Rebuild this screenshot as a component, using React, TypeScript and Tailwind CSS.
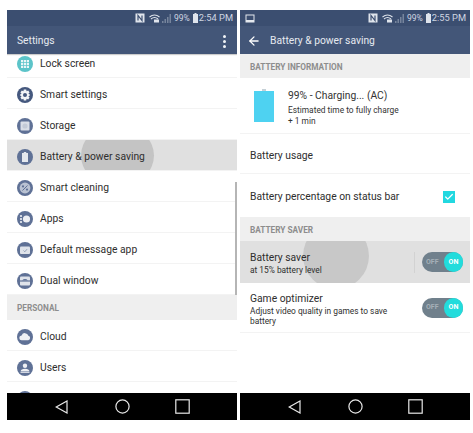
import { ArrowLeft, Check } from 'lucide-react';
import type { ReactNode } from 'react';

function StatusBar({ time, shot }: { time: string; shot?: boolean }) {
  return (
    <div className="h-[16px] bg-[#3b4e70] flex items-center pl-[5px] pr-[4px] text-[#cfd6e2] leading-none">
      {shot && (
        <svg width="10" height="9" viewBox="0 0 10 9">
          <rect x="0.5" y="0.5" width="9" height="8" fill="#e4e8ee" />
          <rect x="1.5" y="1.5" width="7" height="4.5" fill="#3b4e70" />
        </svg>
      )}
      <div className="ml-auto flex items-center">
        <svg width="10" height="10" viewBox="0 0 10 10">
          <rect x="0.5" y="0.5" width="9" height="9" fill="#dfe4ec" />
          <path d="M3 7.5V2.5L7 7.5V2.5" stroke="#3b4e70" strokeWidth="1.2" fill="none" />
        </svg>
        <svg className="ml-[4px]" width="11" height="9" viewBox="0 0 11 9" fill="none" stroke="#dfe4ec">
          <path d="M0.5 3Q5.5 -1 10.5 3M2 5Q5.5 2 9 5" strokeWidth="1.1" />
          <rect x="5" y="5.5" width="5" height="3" fill="#dfe4ec" stroke="none" />
        </svg>
        <svg className="ml-[2px]" width="9" height="9" viewBox="0 0 9 9" fill="#76849c">
          <path d="M0 9V7H1.5V9ZM2.5 9V5H4V9ZM5 9V3H6.5V9ZM7.5 9V0H9V9Z" />
        </svg>
        <span className="ml-[3px] text-[8.5px]">99%</span>
        <svg className="ml-[3px]" width="5" height="10" viewBox="0 0 5 10" fill="#dfe4ec">
          <path d="M1.5 0H3.5V1H5V10H0V1H1.5Z" />
        </svg>
        <span className="ml-[1px] text-[9.3px]">{time}</span>
      </div>
    </div>
  );
}

function NavBar() {
  return (
    <div className="h-[27px] bg-black flex items-center justify-between pl-[48px] pr-[47px]">
      <svg width="14" height="14" viewBox="0 0 14 14" fill="none" stroke="#e8e8e8" strokeWidth="1.2">
        <path d="M12 1V13L1.2 7Z" />
      </svg>
      <svg width="15" height="15" viewBox="0 0 15 15" fill="none" stroke="#e8e8e8" strokeWidth="1.2">
        <circle cx="7.5" cy="7.5" r="6.6" />
      </svg>
      <svg width="15" height="15" viewBox="0 0 15 15" fill="none" stroke="#e8e8e8" strokeWidth="1.2">
        <rect x="0.8" y="0.8" width="13.4" height="13.4" />
      </svg>
    </div>
  );
}

function SettingIcon({ color = '#5f7196', children }: { color?: string; children: ReactNode }) {
  return (
    <svg width="16" height="16" viewBox="0 0 16 16" className="shrink-0">
      <circle cx="8" cy="8" r="8" fill={color} />
      {children}
    </svg>
  );
}

const icons: Record<string, ReactNode> = {
  lock: (
    <SettingIcon color="#5cc4c9">
      <g fill="#eaf6f7">
        <rect x="4" y="4" width="2.2" height="2.2" /><rect x="6.9" y="4" width="2.2" height="2.2" /><rect x="9.8" y="4" width="2.2" height="2.2" />
        <rect x="4" y="6.9" width="2.2" height="2.2" /><rect x="6.9" y="6.9" width="2.2" height="2.2" /><rect x="9.8" y="6.9" width="2.2" height="2.2" />
        <rect x="4" y="9.8" width="2.2" height="2.2" /><rect x="6.9" y="9.8" width="2.2" height="2.2" /><rect x="9.8" y="9.8" width="2.2" height="2.2" />
      </g>
    </SettingIcon>
  ),
  gear: (
    <SettingIcon color="#45587e">
      <path d="M6.8 2.6H9.2L9.6 4.2L11.2 3.4L12.6 5.4L11.4 6.6L13.2 8L11.4 9.4L12.6 10.6L11.2 12.6L9.6 11.8L9.2 13.4H6.8L6.4 11.8L4.8 12.6L3.4 10.6L4.6 9.4L2.8 8L4.6 6.6L3.4 5.4L4.8 3.4L6.4 4.2Z" fill="#f1f3f6" />
      <circle cx="8" cy="8" r="2" fill="#45587e" />
    </SettingIcon>
  ),
  storage: (
    <SettingIcon>
      <rect x="3.5" y="3.5" width="9" height="9" rx="1" fill="#d9dee7" />
      <circle cx="8" cy="8" r="2.6" fill="#c3cad7" />
    </SettingIcon>
  ),
  battery: (
    <SettingIcon>
      <path d="M6.8 3H9.2V4H11V13H5V4H6.8Z" fill="#e4e8ee" />
    </SettingIcon>
  ),
  clean: (
    <SettingIcon>
      <circle cx="8" cy="8" r="5.4" fill="#b9c2d2" />
      <circle cx="6" cy="6.4" r="1.1" fill="#5f7196" />
      <circle cx="10" cy="9.6" r="1.1" fill="#5f7196" />
      <path d="M5.5 10.5L10.5 5.5" stroke="#5f7196" strokeWidth="1" />
    </SettingIcon>
  ),
  apps: (
    <SettingIcon>
      <circle cx="9.5" cy="8" r="3.6" fill="#eef0f4" />
      <circle cx="4" cy="5" r="1.1" fill="#eef0f4" /><circle cx="4" cy="8" r="1.1" fill="#eef0f4" /><circle cx="4" cy="11" r="1.1" fill="#eef0f4" />
    </SettingIcon>
  ),
  message: (
    <SettingIcon>
      <rect x="3" y="4.5" width="10" height="7.5" rx="1" fill="#dfe3ea" />
      <path d="M6.5 8.5L7.8 9.8L10 7.2" stroke="#8b98b0" strokeWidth="0.9" fill="none" />
    </SettingIcon>
  ),
  dual: (
    <SettingIcon>
      <rect x="3" y="3.5" width="10" height="9" rx="1" fill="#dfe3ea" />
      <rect x="3" y="7.4" width="10" height="1.2" fill="#5f7196" />
      <path d="M5 7.4Q8 4.5 11 7.4Z" fill="#5f7196" />
    </SettingIcon>
  ),
  cloud: (
    <SettingIcon>
      <path d="M4.8 11.2a2.4 2.4 0 0 1-.2-4.8a3.6 3.6 0 0 1 6.8.3a2.3 2.3 0 0 1-.2 4.5Z" fill="#eef0f4" />
    </SettingIcon>
  ),
  users: (
    <SettingIcon>
      <circle cx="8" cy="5.8" r="2.2" fill="#eef0f4" />
      <path d="M3.5 11.5Q4 8.8 8 8.8T12.5 11.5Z" fill="#eef0f4" />
      <rect x="3.5" y="12" width="9" height="0.8" fill="#eef0f4" />
    </SettingIcon>
  ),
};

function SettingRow({ icon, label, active }: { icon: string; label: string; active?: boolean }) {
  return (
    <div className={`relative h-[31px] shrink-0 flex items-center gap-[7px] pl-[10px] pt-[3px] text-[10.3px] text-[#2e2e2e] overflow-hidden border-b border-[#f3f3f3] ${active ? 'bg-[#e0e0e0]' : 'bg-white'}`}>
      {active && <div className="absolute left-[74px] top-[-12px] w-[73px] h-[55px] rounded-full bg-[#c4c4c4]" />}
      <span className="relative flex">{icons[icon]}</span>
      <span className="relative">{label}</span>
    </div>
  );
}

function SectionHeader({ children, className }: { children: string; className: string }) {
  return (
    <div className={`bg-[#efefef] flex items-center pl-[10px] pt-[2px] text-[8.25px] font-bold text-[#8d8d8d] ${className}`}>
      {children}
    </div>
  );
}

function Toggle() {
  return (
    <div className="relative w-[41px] h-[20px] rounded-full bg-[#70808c] flex items-center pl-[4px] text-[7px] font-bold text-[#a5b0b8]">
      OFF
      <div className="absolute right-0 top-0 w-[19px] h-[20px] rounded-full bg-[#22dcdc] flex items-center justify-center text-white">ON</div>
    </div>
  );
}

function SettingsPhone() {
  return (
    <div className="relative w-[230px] h-[410px] flex flex-col overflow-hidden">
      <StatusBar time="2:54 PM" />
      <div className="h-[28px] bg-[#435678] flex items-center justify-between pl-[10px] pr-[11px] pt-[2px] text-[10.3px] text-[#e6eaf0] shadow-[0_1px_1px_rgba(0,0,0,0.2)] z-10">
        <span>Settings</span>
        <svg width="3" height="13" viewBox="0 0 3 13" fill="#f2f4f7">
          <circle cx="1.5" cy="1.5" r="1.5" /><circle cx="1.5" cy="6.5" r="1.5" /><circle cx="1.5" cy="11.5" r="1.5" />
        </svg>
      </div>
      <div className="flex-1 min-h-0 overflow-hidden flex flex-col">
        <div className="h-[24px] shrink-0 flex items-end overflow-hidden">
          <div className="flex-1 h-[31px] shrink-0 flex items-center gap-[7px] pl-[10px] pt-[3px] text-[10.3px] text-[#2e2e2e] border-b border-[#f3f3f3]">
            {icons.lock}
            <span>Lock screen</span>
          </div>
        </div>
        <SettingRow icon="gear" label="Smart settings" />
        <SettingRow icon="storage" label="Storage" />
        <SettingRow icon="battery" label="Battery & power saving" active />
        <SettingRow icon="clean" label="Smart cleaning" />
        <SettingRow icon="apps" label="Apps" />
        <SettingRow icon="message" label="Default message app" />
        <SettingRow icon="dual" label="Dual window" />
        <SectionHeader className="h-[25px] shrink-0">PERSONAL</SectionHeader>
        <SettingRow icon="cloud" label="Cloud" />
        <SettingRow icon="users" label="Users" />
        <SettingRow icon="users" label="" />
      </div>
      <div className="absolute right-[0px] top-[172px] w-[2px] h-[113px] bg-[#b5b5b5]" />
      <div className="z-10"><NavBar /></div>
    </div>
  );
}

function BatteryPhone() {
  return (
    <div className="relative w-[230px] h-[410px] flex flex-col overflow-hidden">
      <StatusBar time="2:55 PM" shot />
      <div className="h-[28px] bg-[#435678] flex items-center pl-[7px] gap-[9px] pt-[2px] text-[10.3px] text-[#e6eaf0]">
        <ArrowLeft size={14} strokeWidth={2.2} className="text-white" />
        <span>Battery &amp; power saving</span>
      </div>
      <SectionHeader className="h-[24px]">BATTERY INFORMATION</SectionHeader>
      <div className="h-[56px] flex items-center pl-[14px] border-b border-[#f3f3f3]">
        <div className="flex flex-col items-center">
          <div className="w-[4px] h-[2px] bg-[#c5d0d6]" />
          <div className="w-[20px] h-[31px] bg-[#4ed2f1]" />
        </div>
        <div className="ml-[14px] pt-[5px] text-[#333]">
          <div className="text-[10.3px] leading-[14px] mb-[2px]">99% - Charging... (AC)</div>
          <div className="text-[8.35px] leading-[11px]">Estimated time to fully charge</div>
          <div className="text-[8.35px] leading-[11px]">+ 1 min</div>
        </div>
      </div>
      <div className="h-[40px] flex items-center pl-[10px] pt-[4px] text-[10.3px] text-[#2e2e2e] border-b border-[#f3f3f3]">Battery usage</div>
      <div className="h-[43px] flex items-center justify-between pl-[10px] pr-[15px] pt-[2px] text-[10.3px] text-[#2e2e2e]">
        <span>Battery percentage on status bar</span>
        <div className="w-[12px] h-[12px] bg-[#22d8e0] flex items-center justify-center">
          <Check size={10} strokeWidth={3} className="text-white" />
        </div>
      </div>
      <SectionHeader className="h-[24px]">BATTERY SAVER</SectionHeader>
      <div className="relative h-[42px] bg-[#e0e0e0] flex items-center justify-between pl-[10px] pr-[7px] overflow-hidden">
        <div className="absolute left-[63px] top-[-18px] w-[66px] h-[66px] rounded-full bg-[#c8c8c8]" />
        <div className="relative pt-[3px] text-[#2e2e2e]">
          <div className="text-[10.3px] leading-[14px]">Battery saver</div>
          <div className="text-[8.35px] leading-[11px]">at 15% battery level</div>
        </div>
        <div className="relative flex items-center gap-[7px]">
          <div className="w-px h-[21px] bg-[#d2d2d2]" />
          <Toggle />
        </div>
      </div>
      <div className="h-[50px] flex items-center justify-between pl-[10px] pr-[7px] border-b border-[#f3f3f3]">
        <div className="text-[#2e2e2e] w-[160px] pt-[3px]">
          <div className="text-[10.3px] leading-[14px]">Game optimizer</div>
          <div className="text-[8.35px] leading-[10px]">Adjust video quality in games to save battery</div>
        </div>
        <Toggle />
      </div>
      <div className="flex-1" />
      <NavBar />
    </div>
  );
}

export default function App() {
  return (
    <div className="w-[473px] h-[433px] bg-white flex gap-[3px] pl-[7px] pt-[10px] font-['Roboto',sans-serif] overflow-hidden">
      <SettingsPhone />
      <BatteryPhone />
    </div>
  );
}
